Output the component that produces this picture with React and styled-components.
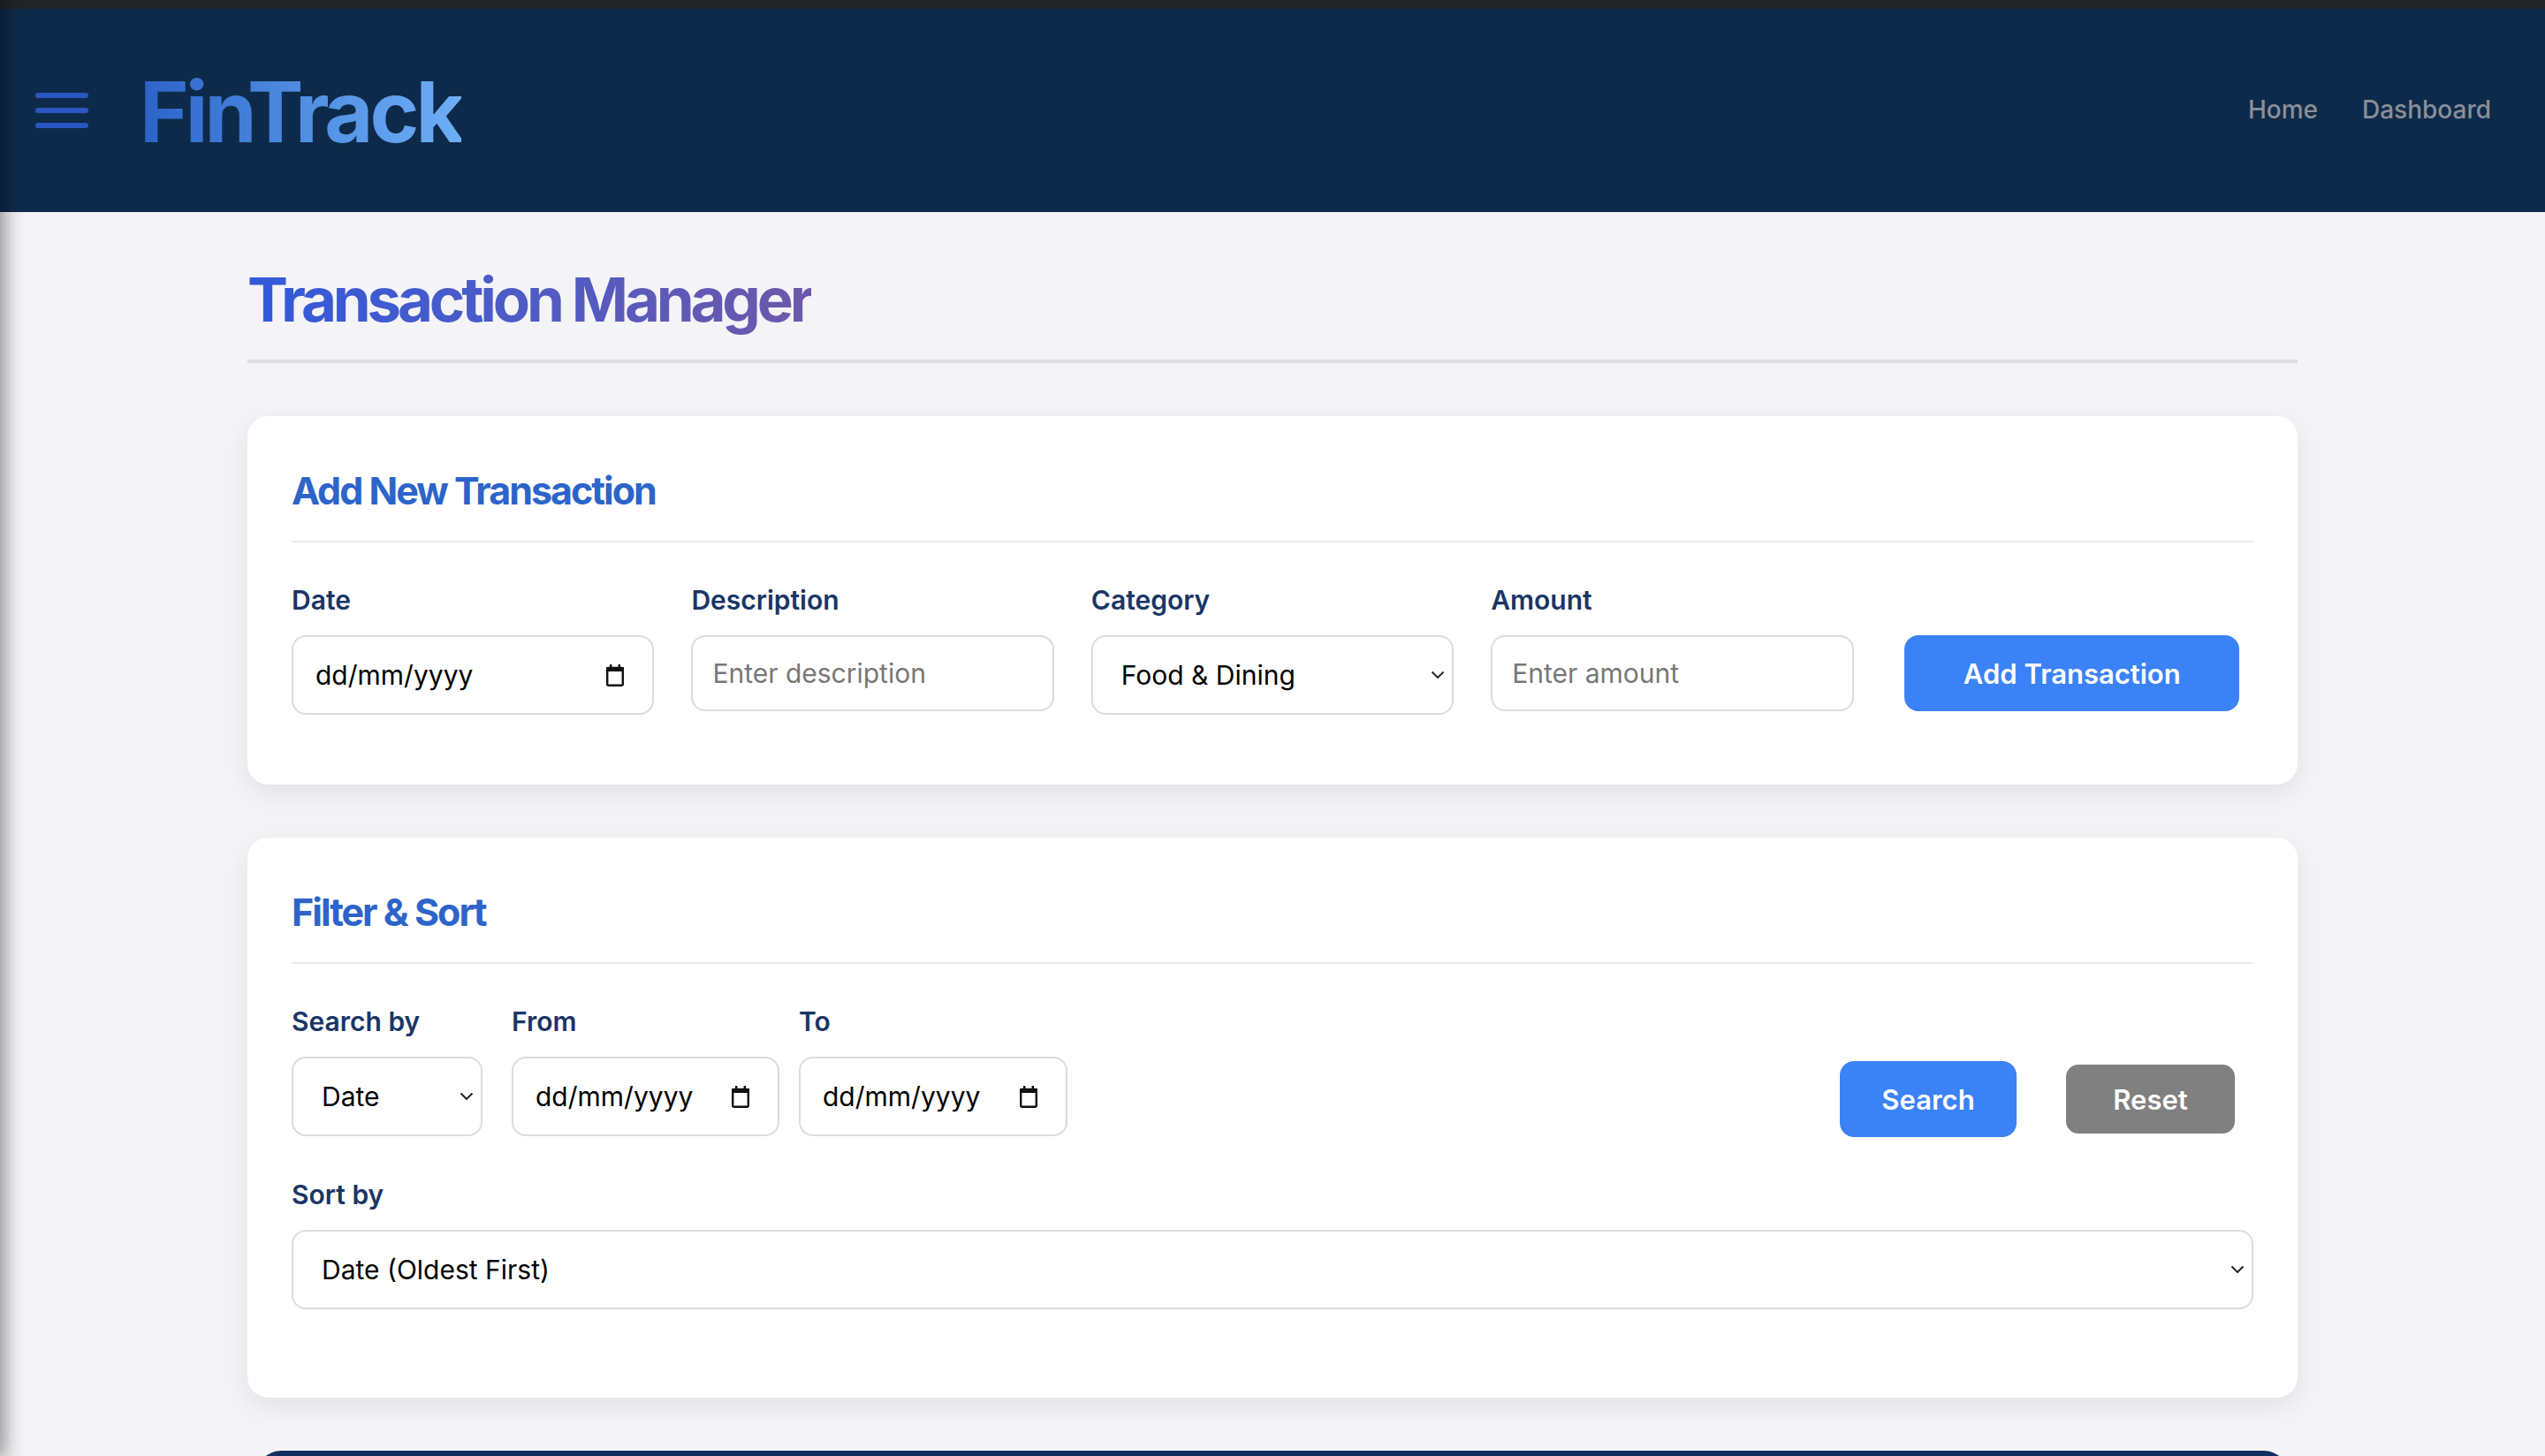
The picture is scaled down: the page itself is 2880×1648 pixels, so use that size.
import React from "react";
import styled, { createGlobalStyle } from "styled-components";

const GlobalStyle = createGlobalStyle`
    * {
        box-sizing: border-box;
    }

    html, body {
        margin: 0;
        padding: 0;
        overflow: hidden;
        background: #f4f4f7;
    }

    body {
        font-family: Inter, "Noto Sans", "Liberation Sans", sans-serif;
    }
`;

const MenuIcon = () => (
    <svg width="60" height="40" viewBox="0 0 60 40">
        <g stroke="#2856c2" strokeWidth="6" strokeLinecap="round">
            <line x1="3" y1="3" x2="57" y2="3" />
            <line x1="3" y1="20" x2="57" y2="20" />
            <line x1="3" y1="37" x2="57" y2="37" />
        </g>
    </svg>
);

const CalendarIcon = () => (
    <svg width="22" height="25" viewBox="0 0 22 25">
        <rect x="2.2" y="4" width="17.6" height="19.8" rx="1.5" fill="none" stroke="#111" strokeWidth="2.4" />
        <rect x="1" y="3" width="20" height="5" fill="#111" />
        <rect x="5" y="0" width="2.4" height="4" fill="#111" />
        <rect x="14.6" y="0" width="2.4" height="4" fill="#111" />
    </svg>
);

const Chevron = () => (
    <svg width="16" height="10" viewBox="0 0 16 10">
        <path d="M1.5 1.5 L8 8 L14.5 1.5" fill="none" stroke="#1a1a1a" strokeWidth="1.8" />
    </svg>
);

const DateField = ({ label, width }) => (
    <Field $w={ width }>
        <Label>{ label }</Label>
        <Box $pl={ 25 } $pr={ 31 }>
            <BoxInput type="text" readOnly value="dd/mm/yyyy" />
            <CalendarIcon />
        </Box>
    </Field>
);

const SelectField = ({ label, width, options }) => (
    <Field $w={ width }>
        <Label>{ label }</Label>
        <Box $pl={ 32 } $pr={ 8 }>
            <BoxSelect defaultValue={ options[0] }>
                { options.map(o => <option key={ o }>{ o }</option>) }
            </BoxSelect>
            <Chevron />
        </Box>
    </Field>
);

const App = () => {
    return (
        <Page>
            <GlobalStyle />
            <Sidebar />
            <TopStrip />

            <Header>
                <Brand>
                    <MenuIcon />
                    <Logo>FinTrack</Logo>
                </Brand>
                <Nav>
                    <NavLink href="#">Home</NavLink>
                    <NavLink href="#">Dashboard</NavLink>
                </Nav>
            </Header>

            <Main>
                <Title><span>Transaction Manager</span></Title>

                <Card $pb={ 79 }>
                    <CardTitle>Add New Transaction</CardTitle>
                    <AddGrid>
                        <DateField label="Date" />
                        <Field>
                            <Label>Description</Label>
                            <TextInput type="text" placeholder="Enter description" />
                        </Field>
                        <SelectField label="Category" options={ ["Food & Dining", "Transport", "Shopping", "Bills", "Salary"] } />
                        <Field>
                            <Label>Amount</Label>
                            <TextInput type="text" placeholder="Enter amount" />
                        </Field>
                        <ButtonCell>
                            <Button $bg="#3b82f6" $w={ 379 } $h={ 86 }>Add Transaction</Button>
                        </ButtonCell>
                    </AddGrid>
                </Card>

                <Card $pb={ 100 }>
                    <CardTitle>Filter &amp; Sort</CardTitle>
                    <FilterRow>
                        <SelectField label="Search by" width={ 216 } options={ ["Date", "Category", "Amount"] } />
                        <Spacer $w={ 33 } />
                        <DateField label="From" width={ 303 } />
                        <Spacer $w={ 22 } />
                        <DateField label="To" width={ 304 } />
                        <Buttons>
                            <Button $bg="#3b82f6" $w={ 200 } $h={ 86 }>Search</Button>
                            <Button $bg="#808080" $w={ 191 } $h={ 78 } $r={ 14 }>Reset</Button>
                        </Buttons>
                    </FilterRow>
                    <SortField>
                        <SelectField label="Sort by" options={ ["Date (Oldest First)", "Date (Newest First)", "Amount (Low to High)", "Amount (High to Low)"] } />
                    </SortField>
                </Card>

                <TableCard />
            </Main>
        </Page>
    );
}

export default App;

const Page = styled.div`
    min-height: 1648px;
    background: #f4f4f7;
`;

const Sidebar = styled.div`
    position: fixed;
    top: 0;
    left: -300px;
    width: 300px;
    height: 100vh;
    background: #0f2a4a;
    box-shadow: 0 0 22px 4px rgba(0, 0, 0, 0.45);
    z-index: 5;
`;

const TopStrip = styled.div`
    height: 10px;
    background: #212528;
`;

const Header = styled.header`
    height: 230px;
    background: #0e2a4a;
    display: flex;
    align-items: center;
    justify-content: space-between;
    padding: 0 61px 0 40px;
`;

const Brand = styled.div`
    display: flex;
    align-items: center;
    gap: 58px;
`;

const Logo = styled.div`
    font-size: 95px;
    font-weight: 700;
    line-height: 1.2;
    letter-spacing: -4px;
    background: linear-gradient(90deg, #2c62c8 0%, #4f8ee2 50%, #6eaef6 100%);
    -webkit-background-clip: text;
    background-clip: text;
    color: transparent;
    margin-top: 4px;
`;

const Nav = styled.nav`
    display: flex;
    gap: 50px;
    margin-top: -2px;
`;

const NavLink = styled.a`
    font-size: 28px;
    font-weight: 500;
    color: #8b8f98;
    text-decoration: none;
`;

const Main = styled.main`
    width: 2320px;
    margin: 0 auto;
    padding-top: 57px;
`;

const Title = styled.h1`
    margin: 0;
    padding-bottom: 26px;
    border-bottom: 4px solid #dddde1;
    font-size: 69px;
    line-height: 84px;
    font-weight: 700;
    letter-spacing: -4.2px;

    span {
        background: linear-gradient(90deg, #3259da 0%, #4f5bc4 50%, #6c58aa 100%);
        -webkit-background-clip: text;
        background-clip: text;
        color: transparent;
    }
`;

const Card = styled.section`
    margin-top: 60px;
    background: #fff;
    border-radius: 24px;
    padding: 58px 50px ${ ({ $pb }) => $pb }px;
    box-shadow: 0 10px 30px rgba(0, 0, 0, 0.08);
`;

const CardTitle = styled.h2`
    margin: 0 0 47px;
    padding-bottom: 30px;
    border-bottom: 2px solid #ececee;
    font-size: 43px;
    line-height: 53px;
    font-weight: 700;
    letter-spacing: -2px;
    color: #2c64c9;
`;

const AddGrid = styled.div`
    display: grid;
    grid-template-columns: repeat(5, minmax(0, 1fr));
    column-gap: 42px;
    align-items: start;
`;

const Field = styled.div`
    display: flex;
    flex-direction: column;
    min-width: 0;
    width: ${ ({ $w }) => $w ? `${ $w }px` : 'auto' };
    flex: ${ ({ $w }) => $w ? 'none' : '1' };
`;

const Label = styled.label`
    display: block;
    font-size: 30px;
    line-height: 36px;
    font-weight: 600;
    color: #1a3566;
    margin-bottom: 22px;
`;

const Box = styled.div`
    display: flex;
    align-items: center;
    height: 90px;
    padding: 0 ${ ({ $pr }) => $pr }px 0 ${ ({ $pl }) => $pl }px;
    border: 2px solid #dcdcdc;
    border-radius: 16px;
    background: #fff;

    svg {
        flex: none;
    }
`;

const BoxInput = styled.input`
    flex: 1;
    min-width: 0;
    width: 100%;
    border: none;
    outline: none;
    padding: 0;
    background: transparent;
    font-family: inherit;
    font-size: 30px;
    color: #000;
`;

const BoxSelect = styled.select`
    flex: 1;
    min-width: 0;
    width: 100%;
    appearance: none;
    border: none;
    outline: none;
    padding: 0;
    background: transparent;
    font-family: inherit;
    font-size: 30px;
    color: #000;
`;

const TextInput = styled.input`
    height: 86px;
    width: 100%;
    padding: 0 22px;
    border: 2px solid #dcdcdc;
    border-radius: 16px;
    outline: none;
    font-family: inherit;
    font-size: 30px;
    color: #000;

    &::placeholder {
        color: #777;
    }
`;

const ButtonCell = styled.div`
    display: flex;
    justify-content: center;
    padding-top: 58px;
`;

const Button = styled.button`
    width: ${ ({ $w }) => $w }px;
    height: ${ ({ $h }) => $h }px;
    border: none;
    border-radius: ${ ({ $r }) => $r || 16 }px;
    background: ${ ({ $bg }) => $bg };
    color: #fff;
    font-family: inherit;
    font-size: 31px;
    font-weight: 600;
    cursor: pointer;
`;

const FilterRow = styled.div`
    display: flex;
    align-items: flex-end;
`;

const Spacer = styled.div`
    width: ${ ({ $w }) => $w }px;
    flex: none;
`;

const Buttons = styled.div`
    margin-left: auto;
    display: flex;
    align-items: center;
    gap: 56px;
    padding-right: 21px;
    margin-bottom: -1px;
`;

const SortField = styled.div`
    margin-top: 48px;
    display: flex;
`;

const TableCard = styled.div`
    margin: 60px 10px 0;
    height: 300px;
    background: #12305f;
    border-radius: 28px 28px 0 0;
`;
